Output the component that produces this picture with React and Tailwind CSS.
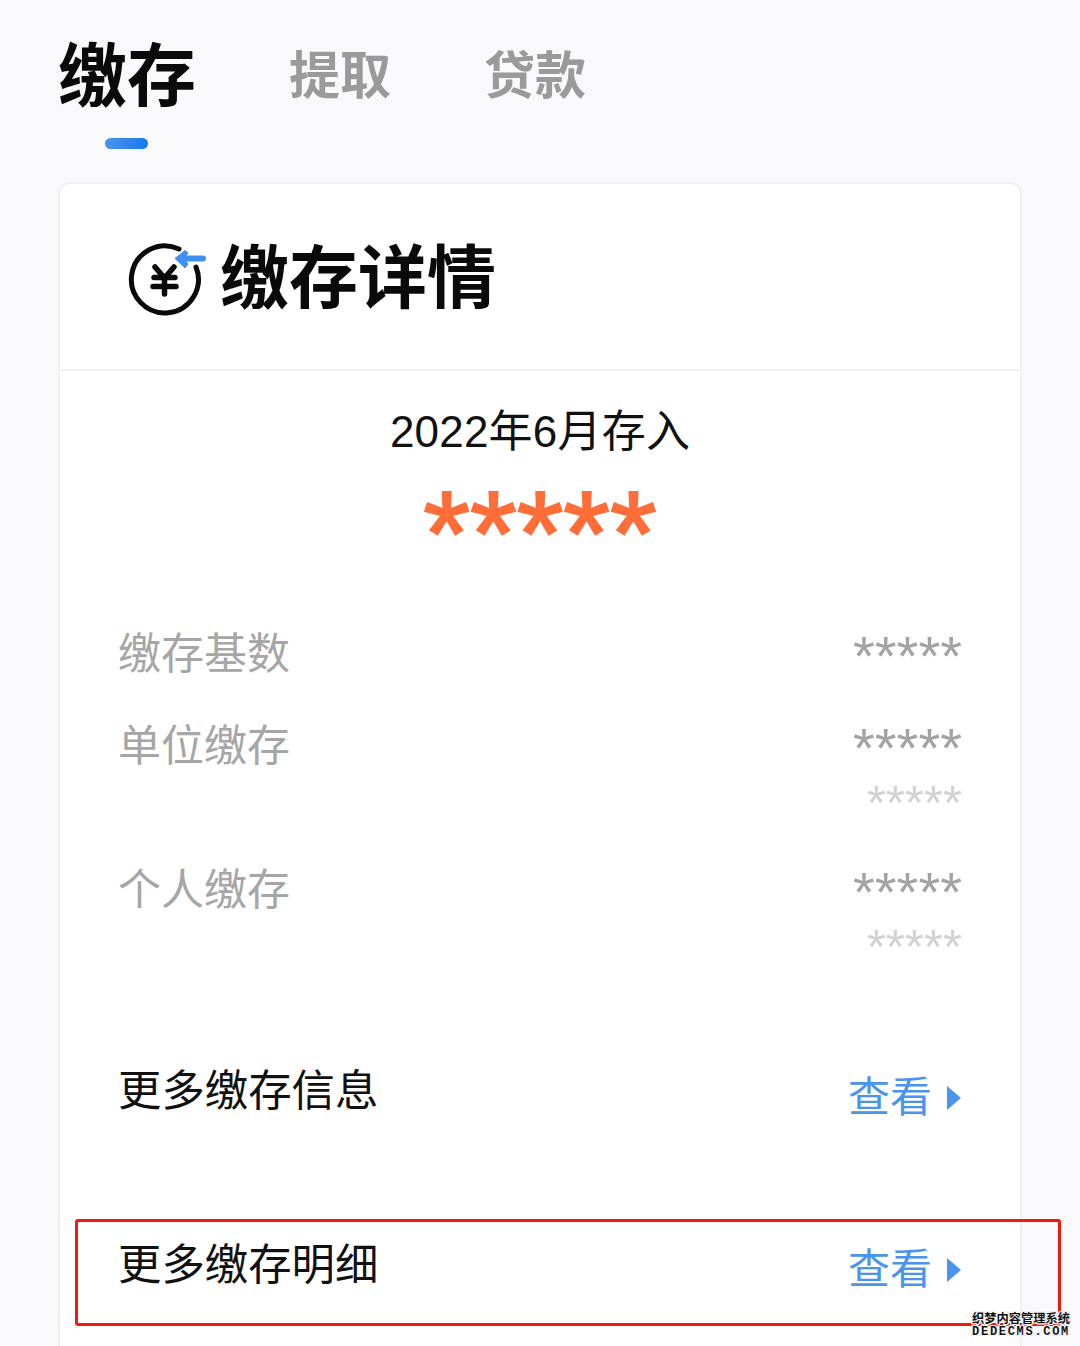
import React from 'react';

const CJK = "font-['Liberation_Sans','Noto_Sans_CJK_SC',sans-serif]";

function YuanIcon() {
  return (
    <svg className="mt-[6px]" width="82" height="74" viewBox="0 0 82 74" fill="none">
      {/* ring with a gap where the arrow comes in */}
      <path d="M53 6 A33.5 33.5 0 1 0 70 24" stroke="#0a0a0a" strokeWidth="5" strokeLinecap="round" />
      {/* yen sign */}
      <path d="M29 24 L38.5 35 L48 24 M28 34.5 H49 M27 43.5 H50 M38.5 35 V51" stroke="#0a0a0a" strokeWidth="5.5" strokeLinecap="round" strokeLinejoin="round" />
      {/* arrow */}
      <path d="M56 15.5 H77" stroke="#3f8ff0" strokeWidth="6" strokeLinecap="round" />
      <path d="M49 15.5 L59 7.5 L62 10 L58 15.5 L62 21 L59 25 Z" fill="#3f8ff0" stroke="#3f8ff0" strokeWidth="1" strokeLinejoin="round" />
    </svg>
  );
}

function AmountRow({ label, sub }) {
  return (
    <div className="flex justify-between items-start">
      <div className="text-[43px] leading-[60px] text-[#a6a6a6]">{label}</div>
      <div className="flex flex-col items-end mt-[5px]">
        <div className="font-['Liberation_Sans'] text-[56px] leading-[54px] h-[54px] text-[#a3a3a3]">*****</div>
        {sub && <div className="font-['Liberation_Sans'] text-[49px] leading-[54px] h-[54px] text-[#d2d2d2]">*****</div>}
      </div>
    </div>
  );
}

function LinkRow({ label, className, actionClass }) {
  return (
    <div className={`flex justify-between items-center ${className}`}>
      <div className="text-[43.4px] leading-[60px] text-[#111111]">{label}</div>
      <div className={`flex items-center gap-[15px] mr-[1px] ${actionClass}`}>
        <span className="text-[42px] leading-[60px] text-[#4a94ec]">查看</span>
        <svg width="14" height="24" viewBox="0 0 14 24"><path d="M0 0 L14 12 L0 24 Z" fill="#4a94ec" /></svg>
      </div>
    </div>
  );
}

export default function App() {
  return (
    <div className={`relative w-[1080px] h-[1346px] overflow-hidden bg-[#f9f9fb] ${CJK}`}>
      {/* tabs */}
      <div className="flex items-start pl-[60px] pt-[33px] h-[182px]">
        <div className="w-[134px] flex flex-col items-center">
          <div className="text-[69px] leading-[90px] font-bold text-[#0a0a0a] whitespace-nowrap">缴存</div>
          <div className="w-[43px] h-[11px] mt-[15px] ml-[-2px] rounded-full bg-gradient-to-r from-[#4a94ec] to-[#1677f0]" />
        </div>
        <div className="ml-[95px] mt-[-1px] text-[51px] leading-[90px] font-bold text-[#9a9a9a]">提取</div>
        <div className="ml-[93px] mt-[-1px] text-[51px] leading-[90px] font-bold text-[#9a9a9a]">贷款</div>
      </div>

      {/* card */}
      <div className="ml-[58px] w-[964px] h-[1200px] bg-white rounded-t-[12px] border-2 border-b-0 border-[#f0f0f6]">
        <div className="h-[187px] flex items-center pl-[66px] gap-[12px] border-b-2 border-[#f2f2f5]">
          <YuanIcon />
          <div className="mt-[6px] text-[69px] leading-[90px] font-bold text-[#0a0a0a] whitespace-nowrap">缴存详情</div>
        </div>

        <div className="flex flex-col items-center">
          <div className="mt-[31px] text-[44px] leading-[60px] tracking-[0.2px] text-[#111111] whitespace-nowrap">2022年6月存入</div>
          <div className="mt-[11px] h-[70px] font-['Liberation_Sans'] text-[120px] leading-[120px] text-[#ff6d38] [-webkit-text-stroke:2px_#ff6d38]">*****</div>
        </div>

        <div className="px-[58px] mt-[81px]">
          <AmountRow label="缴存基数" />
          <div className="mt-[32px]"><AmountRow label="单位缴存" sub /></div>
          <div className="mt-[31px]"><AmountRow label="个人缴存" sub /></div>
          <LinkRow label="更多缴存信息" className="mt-[81px]" actionClass="mt-[14px]" />
          <LinkRow label="更多缴存明细" className="mt-[102px]" actionClass="mt-[10px]" />
        </div>
      </div>

      {/* highlight box */}
      <div className="absolute left-[75px] top-[1219px] w-[986px] h-[107px] border-[3px] border-[#f5180f] rounded-[3px]" />

      {/* watermark */}
      <div className="absolute right-[10px] bottom-[7px] flex flex-col items-end text-[#111] font-bold [text-shadow:1px_0_0_#fff,-1px_0_0_#fff,0_1px_0_#fff,0_-1px_0_#fff,1px_1px_0_#ddd,-1px_-1px_0_#ddd,1px_-1px_0_#ddd,-1px_1px_0_#ddd]">
        <div className="text-[12.25px] leading-[15px] font-['Noto_Sans_CJK_SC',sans-serif] whitespace-nowrap">织梦内容管理系统</div>
        <div className="font-['Liberation_Mono',monospace] text-[12px] leading-[13px] tracking-[1.7px] whitespace-nowrap">DEDECMS.COM</div>
      </div>
    </div>
  );
}
